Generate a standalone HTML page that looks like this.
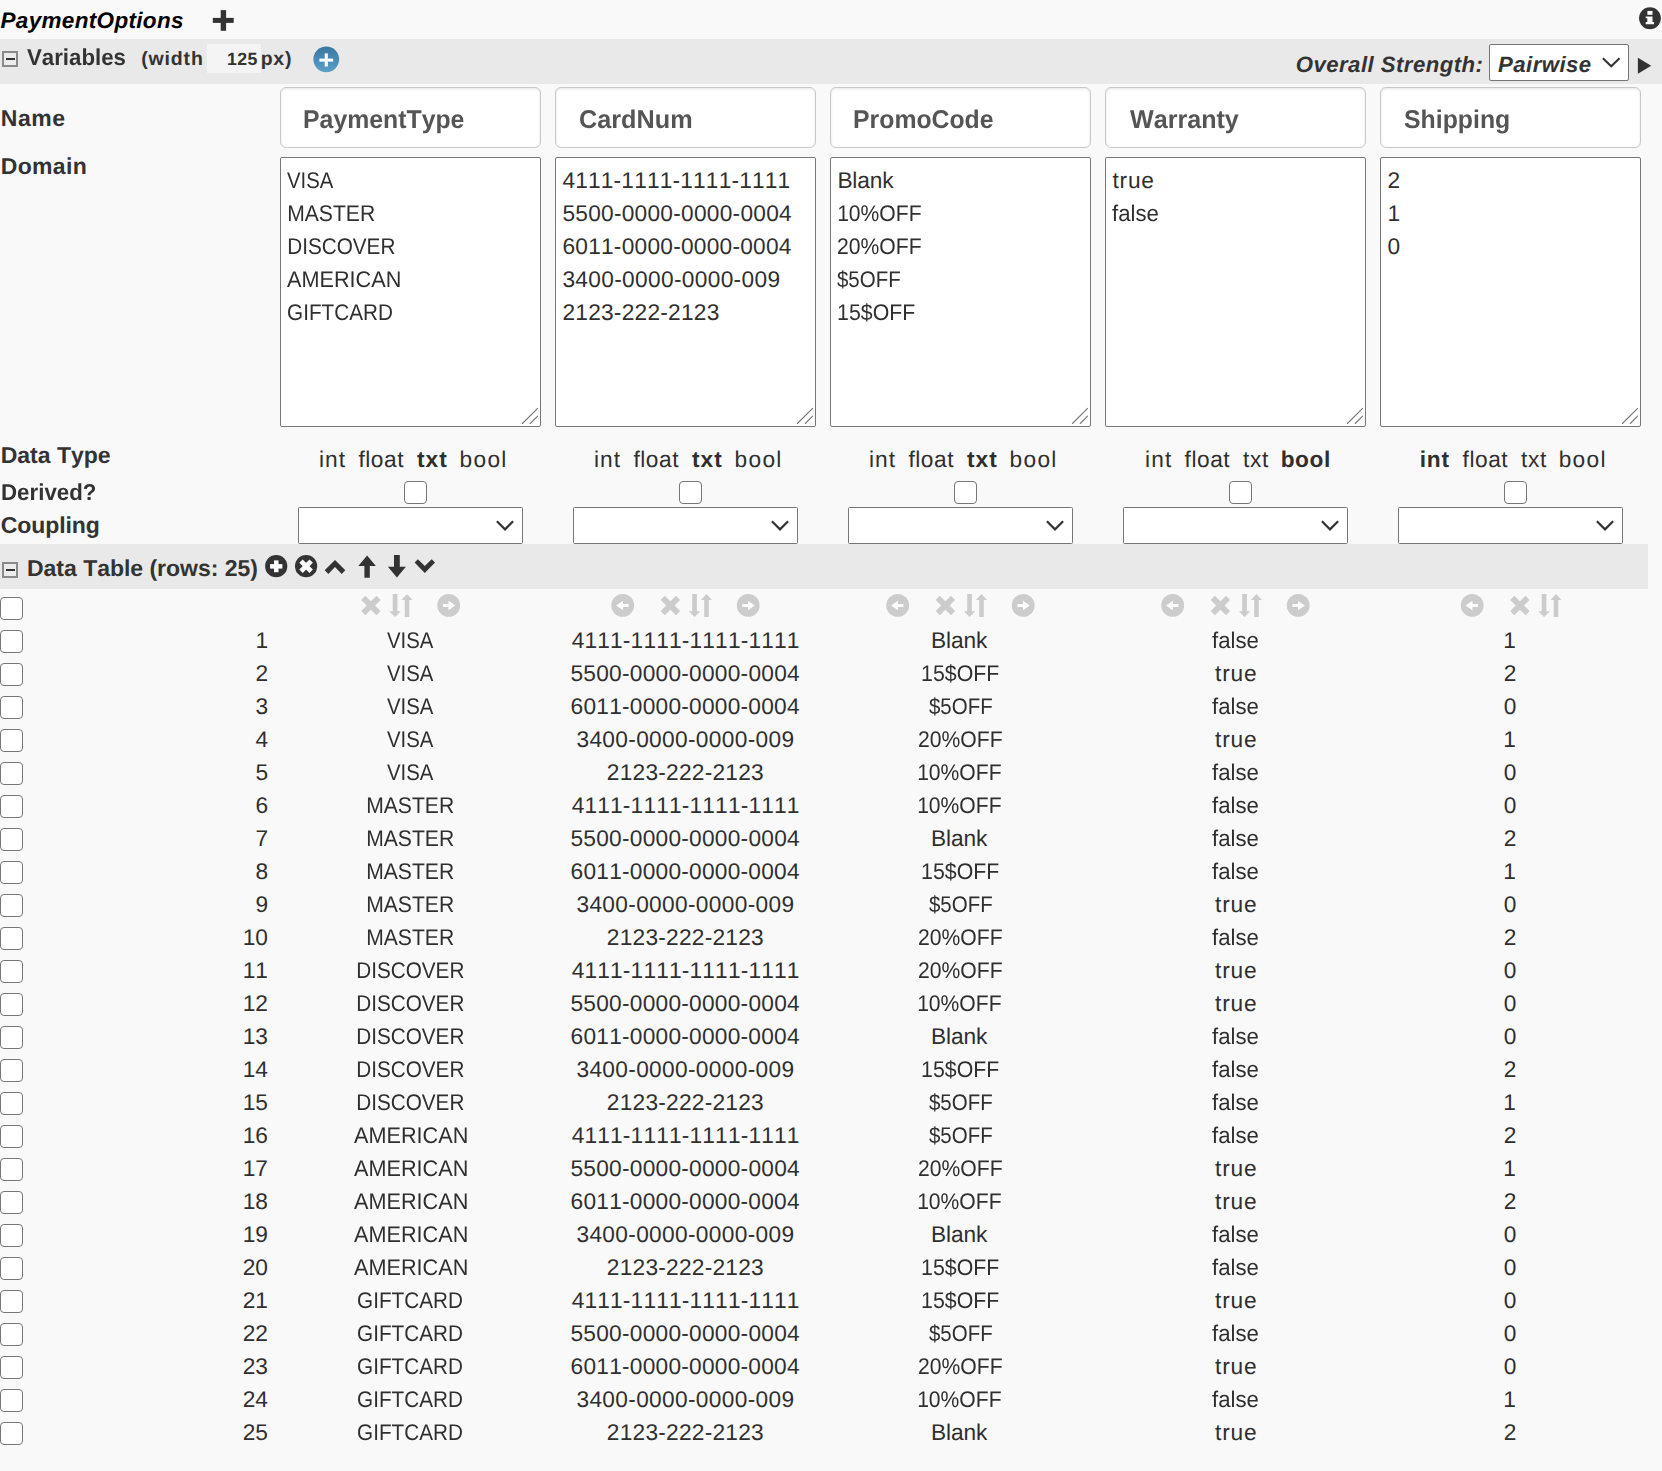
<!DOCTYPE html>
<html><head><meta charset="utf-8">
<style>
html,body{margin:0;padding:0}
body{width:1662px;height:1471px;overflow:hidden;position:relative;background:#f9f9f9;font-family:"Liberation Sans",sans-serif;}
.t{position:absolute;white-space:pre;line-height:40px;font-kerning:none;text-rendering:geometricPrecision;}
.bar{position:absolute;left:0;background:#e9e9e9;height:45px}
.mbox{position:absolute;left:2px;width:12px;height:12px;border:2px solid #8a8a8a;background:#ececec}
.mbox:after{content:"";position:absolute;left:1.5px;top:5px;width:9px;height:2px;background:#333}
.namebox{position:absolute;top:87px;width:259px;height:59px;border:1px solid #c8c8c8;border-radius:6px;background:#fff;box-shadow:inset 0 1px 3px rgba(0,0,0,0.10)}
.ta{position:absolute;top:157px;width:259px;height:268px;border:1px solid #767676;border-radius:2px;background:#fff}
.grip{position:absolute}
.cb{position:absolute;width:21px;height:21px;border:1px solid #767676;border-radius:4px;background:#fff}
.sel{position:absolute;width:223px;height:35px;border:1px solid #767676;border-radius:1.5px;background:#fff}
svg{display:block}
.ic{position:absolute}
</style></head><body>
<div class="bar" style="top:39px;width:1662px"></div>
<div class="mbox" style="top:51px"></div>
<div style="position:absolute;left:207px;top:44px;width:54px;height:29px;background:#f4f4f4"></div>
<div style="position:absolute;left:1489px;top:44px;width:138px;height:35px;border:1px solid #767676;border-radius:2px;background:#fff"></div>
<div class="bar" style="top:544px;width:1648px"></div>
<div class="mbox" style="top:562px"></div>
<div class="cb" style="left:0px;top:597px"></div>
<!--ICONS-->
<div class="t" style="top:1.20px;font-size:22.5px;font-weight:700;font-style:italic;color:#000;letter-spacing:0.323px;left:0.50px;">PaymentOptions</div>
<div class="t" style="top:97.60px;font-size:23px;font-weight:700;font-style:normal;color:#333;letter-spacing:0.600px;left:0.70px;">Name</div>
<div class="t" style="top:145.60px;font-size:23px;font-weight:700;font-style:normal;color:#333;letter-spacing:0.340px;left:0.70px;">Domain</div>
<div class="t" style="top:435.00px;font-size:23px;font-weight:700;font-style:normal;color:#333;letter-spacing:0.000px;left:0.70px;">Data Type</div>
<div class="t" style="top:471.80px;font-size:23px;font-weight:700;font-style:normal;color:#333;letter-spacing:0px;--x:-0.429px;transform:scaleX(0.9688);transform-origin:1px 0;left:0.70px;">Derived?</div>
<div class="t" style="top:504.80px;font-size:23px;font-weight:700;font-style:normal;color:#333;letter-spacing:-0.071px;left:0.70px;">Coupling</div>
<div class="t" style="top:37.00px;font-size:23px;font-weight:700;font-style:normal;color:#333;letter-spacing:0px;--x:-0.425px;transform:scaleX(0.9667);transform-origin:0px 0;left:26.50px;">Variables</div>
<div class="t" style="top:38.80px;font-size:19.5px;font-weight:700;font-style:normal;color:#333;letter-spacing:0.860px;left:141.20px;">(width</div>
<div class="t" style="top:38.80px;font-size:17.7px;font-weight:700;font-style:normal;color:#333;letter-spacing:0.400px;left:227.00px;">125</div>
<div class="t" style="top:38.80px;font-size:19.5px;font-weight:700;font-style:normal;color:#333;letter-spacing:0.750px;left:260.70px;">px)</div>
<div class="t" style="top:45.10px;font-size:22.2px;font-weight:700;font-style:italic;color:#333;letter-spacing:0.456px;left:1295.70px;">Overall Strength:</div>
<div class="t" style="top:45.10px;font-size:22.2px;font-weight:700;font-style:italic;color:#333;letter-spacing:0.429px;left:1498.10px;">Pairwise</div>
<div class="namebox" style="left:280px"></div>
<div class="t" style="top:99.70px;font-size:25.7px;font-weight:700;font-style:normal;color:#555;letter-spacing:0px;--x:-0.560px;transform:scaleX(0.9659);transform-origin:2px 0;left:302.60px;">PaymentType</div>
<div class="ta" style="left:280px"></div>
<svg class="grip" style="left:520px;top:405px" width="20" height="20" viewBox="0 0 20 20"><path d="M2.4 18.5 L17.6 3.4 M10.3 18.5 L17.6 11.2" stroke="#777" stroke-width="1.1" stroke-linecap="round"/></svg>
<div class="t" style="top:159.70px;font-size:22.7px;font-weight:400;font-style:normal;color:#2f2f2f;letter-spacing:0px;--x:-1.800px;transform:scaleX(0.8962);transform-origin:0px 0;left:287.40px;">VISA</div>
<div class="t" style="top:192.70px;font-size:22.7px;font-weight:400;font-style:normal;color:#2f2f2f;letter-spacing:0px;--x:-1.260px;transform:scaleX(0.9308);transform-origin:2px 0;left:287.40px;">MASTER</div>
<div class="t" style="top:225.70px;font-size:22.7px;font-weight:400;font-style:normal;color:#2f2f2f;letter-spacing:0px;--x:-1.429px;transform:scaleX(0.9130);transform-origin:2px 0;left:287.40px;">DISCOVER</div>
<div class="t" style="top:258.70px;font-size:22.7px;font-weight:400;font-style:normal;color:#2f2f2f;letter-spacing:0px;--x:-0.771px;transform:scaleX(0.9542);transform-origin:0px 0;left:287.40px;">AMERICAN</div>
<div class="t" style="top:291.70px;font-size:22.7px;font-weight:400;font-style:normal;color:#2f2f2f;letter-spacing:0px;--x:-1.429px;transform:scaleX(0.9123);transform-origin:1px 0;left:287.40px;">GIFTCARD</div>
<div class="t" style="top:439.10px;font-size:22.7px;font-weight:400;font-style:normal;color:#2f2f2f;letter-spacing:1.100px;left:318.90px;">int</div>
<div class="t" style="top:439.10px;font-size:22.7px;font-weight:400;font-style:normal;color:#2f2f2f;letter-spacing:0.550px;left:358.40px;">float</div>
<div class="t" style="top:439.10px;font-size:22.7px;font-weight:700;font-style:normal;color:#2f2f2f;letter-spacing:1.150px;left:416.90px;">txt</div>
<div class="t" style="top:439.10px;font-size:22.7px;font-weight:400;font-style:normal;color:#2f2f2f;letter-spacing:1.333px;left:459.50px;">bool</div>
<div class="cb" style="left:404px;top:481px"></div>
<div class="sel" style="left:298px;top:507px"><svg style="position:absolute;left:196px;top:12px" width="20" height="12" viewBox="0 0 20 12"><path d="M1.9 1.3 L10 9.4 L18.1 1.3" fill="none" stroke="#333" stroke-width="2.2"/></svg></div>
<div class="namebox" style="left:555px"></div>
<div class="t" style="top:99.70px;font-size:25.7px;font-weight:700;font-style:normal;color:#555;letter-spacing:0px;--x:-0.333px;transform:scaleX(0.9823);transform-origin:1px 0;left:578.60px;">CardNum</div>
<div class="ta" style="left:555px"></div>
<svg class="grip" style="left:795px;top:405px" width="20" height="20" viewBox="0 0 20 20"><path d="M2.4 18.5 L17.6 3.4 M10.3 18.5 L17.6 11.2" stroke="#777" stroke-width="1.1" stroke-linecap="round"/></svg>
<div class="t" style="top:159.70px;font-size:22.7px;font-weight:400;font-style:normal;color:#2f2f2f;letter-spacing:0.183px;left:562.40px;">4111-1111-1111-1111</div>
<div class="t" style="top:192.70px;font-size:22.7px;font-weight:400;font-style:normal;color:#2f2f2f;letter-spacing:0.261px;left:562.40px;">5500-0000-0000-0004</div>
<div class="t" style="top:225.70px;font-size:22.7px;font-weight:400;font-style:normal;color:#2f2f2f;letter-spacing:0.250px;left:562.40px;">6011-0000-0000-0004</div>
<div class="t" style="top:258.70px;font-size:22.7px;font-weight:400;font-style:normal;color:#2f2f2f;letter-spacing:0.335px;left:562.40px;">3400-0000-0000-009</div>
<div class="t" style="top:291.70px;font-size:22.7px;font-weight:400;font-style:normal;color:#2f2f2f;letter-spacing:0.250px;left:562.40px;">2123-222-2123</div>
<div class="t" style="top:439.10px;font-size:22.7px;font-weight:400;font-style:normal;color:#2f2f2f;letter-spacing:1.100px;left:593.90px;">int</div>
<div class="t" style="top:439.10px;font-size:22.7px;font-weight:400;font-style:normal;color:#2f2f2f;letter-spacing:0.550px;left:633.40px;">float</div>
<div class="t" style="top:439.10px;font-size:22.7px;font-weight:700;font-style:normal;color:#2f2f2f;letter-spacing:1.150px;left:691.90px;">txt</div>
<div class="t" style="top:439.10px;font-size:22.7px;font-weight:400;font-style:normal;color:#2f2f2f;letter-spacing:1.333px;left:734.50px;">bool</div>
<div class="cb" style="left:679px;top:481px"></div>
<div class="sel" style="left:573px;top:507px"><svg style="position:absolute;left:196px;top:12px" width="20" height="12" viewBox="0 0 20 12"><path d="M1.9 1.3 L10 9.4 L18.1 1.3" fill="none" stroke="#333" stroke-width="2.2"/></svg></div>
<div class="namebox" style="left:830px"></div>
<div class="t" style="top:99.70px;font-size:25.7px;font-weight:700;font-style:normal;color:#555;letter-spacing:0px;--x:-0.625px;transform:scaleX(0.9650);transform-origin:2px 0;left:852.60px;">PromoCode</div>
<div class="ta" style="left:830px"></div>
<svg class="grip" style="left:1070px;top:405px" width="20" height="20" viewBox="0 0 20 20"><path d="M2.4 18.5 L17.6 3.4 M10.3 18.5 L17.6 11.2" stroke="#777" stroke-width="1.1" stroke-linecap="round"/></svg>
<div class="t" style="top:159.70px;font-size:22.7px;font-weight:400;font-style:normal;color:#2f2f2f;letter-spacing:-0.150px;left:837.40px;">Blank</div>
<div class="t" style="top:192.70px;font-size:22.7px;font-weight:400;font-style:normal;color:#2f2f2f;letter-spacing:0px;--x:-1.240px;transform:scaleX(0.9295);transform-origin:2px 0;left:837.40px;">10%OFF</div>
<div class="t" style="top:225.70px;font-size:22.7px;font-weight:400;font-style:normal;color:#2f2f2f;letter-spacing:0px;--x:-1.220px;transform:scaleX(0.9315);transform-origin:1px 0;left:837.40px;">20%OFF</div>
<div class="t" style="top:258.70px;font-size:22.7px;font-weight:400;font-style:normal;color:#2f2f2f;letter-spacing:0px;--x:-1.725px;transform:scaleX(0.9014);transform-origin:0px 0;left:837.40px;">$5OFF</div>
<div class="t" style="top:291.70px;font-size:22.7px;font-weight:400;font-style:normal;color:#2f2f2f;letter-spacing:0px;--x:-0.980px;transform:scaleX(0.9387);transform-origin:2px 0;left:837.40px;">15$OFF</div>
<div class="t" style="top:439.10px;font-size:22.7px;font-weight:400;font-style:normal;color:#2f2f2f;letter-spacing:1.100px;left:868.90px;">int</div>
<div class="t" style="top:439.10px;font-size:22.7px;font-weight:400;font-style:normal;color:#2f2f2f;letter-spacing:0.550px;left:908.40px;">float</div>
<div class="t" style="top:439.10px;font-size:22.7px;font-weight:700;font-style:normal;color:#2f2f2f;letter-spacing:1.150px;left:966.90px;">txt</div>
<div class="t" style="top:439.10px;font-size:22.7px;font-weight:400;font-style:normal;color:#2f2f2f;letter-spacing:1.333px;left:1009.50px;">bool</div>
<div class="cb" style="left:954px;top:481px"></div>
<div class="sel" style="left:848px;top:507px"><svg style="position:absolute;left:196px;top:12px" width="20" height="12" viewBox="0 0 20 12"><path d="M1.9 1.3 L10 9.4 L18.1 1.3" fill="none" stroke="#333" stroke-width="2.2"/></svg></div>
<div class="namebox" style="left:1105px"></div>
<div class="t" style="top:99.70px;font-size:25.7px;font-weight:700;font-style:normal;color:#555;letter-spacing:0px;--x:-0.357px;transform:scaleX(0.9775);transform-origin:0px 0;left:1129.60px;">Warranty</div>
<div class="ta" style="left:1105px"></div>
<svg class="grip" style="left:1345px;top:405px" width="20" height="20" viewBox="0 0 20 20"><path d="M2.4 18.5 L17.6 3.4 M10.3 18.5 L17.6 11.2" stroke="#777" stroke-width="1.1" stroke-linecap="round"/></svg>
<div class="t" style="top:159.70px;font-size:22.7px;font-weight:400;font-style:normal;color:#2f2f2f;letter-spacing:0.833px;left:1112.40px;">true</div>
<div class="t" style="top:192.70px;font-size:22.7px;font-weight:400;font-style:normal;color:#2f2f2f;letter-spacing:0px;--x:-0.275px;transform:scaleX(0.9766);transform-origin:0px 0;left:1112.40px;">false</div>
<div class="t" style="top:439.10px;font-size:22.7px;font-weight:400;font-style:normal;color:#2f2f2f;letter-spacing:1.100px;left:1145.05px;">int</div>
<div class="t" style="top:439.10px;font-size:22.7px;font-weight:400;font-style:normal;color:#2f2f2f;letter-spacing:0.550px;left:1184.55px;">float</div>
<div class="t" style="top:439.10px;font-size:22.7px;font-weight:400;font-style:normal;color:#2f2f2f;letter-spacing:0.650px;left:1243.05px;">txt</div>
<div class="t" style="top:439.10px;font-size:22.7px;font-weight:700;font-style:normal;color:#2f2f2f;letter-spacing:0.567px;left:1280.65px;">bool</div>
<div class="cb" style="left:1229px;top:481px"></div>
<div class="sel" style="left:1123px;top:507px"><svg style="position:absolute;left:196px;top:12px" width="20" height="12" viewBox="0 0 20 12"><path d="M1.9 1.3 L10 9.4 L18.1 1.3" fill="none" stroke="#333" stroke-width="2.2"/></svg></div>
<div class="namebox" style="left:1380px"></div>
<div class="t" style="top:99.70px;font-size:25.7px;font-weight:700;font-style:normal;color:#555;letter-spacing:0px;--x:-0.514px;transform:scaleX(0.9664);transform-origin:1px 0;left:1403.60px;">Shipping</div>
<div class="ta" style="left:1380px"></div>
<svg class="grip" style="left:1620px;top:405px" width="20" height="20" viewBox="0 0 20 20"><path d="M2.4 18.5 L17.6 3.4 M10.3 18.5 L17.6 11.2" stroke="#777" stroke-width="1.1" stroke-linecap="round"/></svg>
<div class="t" style="top:159.70px;font-size:22.7px;font-weight:400;font-style:normal;color:#2f2f2f;letter-spacing:0.000px;left:1387.40px;">2</div>
<div class="t" style="top:192.70px;font-size:22.7px;font-weight:400;font-style:normal;color:#2f2f2f;letter-spacing:0.000px;left:1387.40px;">1</div>
<div class="t" style="top:225.70px;font-size:22.7px;font-weight:400;font-style:normal;color:#2f2f2f;letter-spacing:0.000px;left:1387.40px;">0</div>
<div class="t" style="top:439.10px;font-size:22.7px;font-weight:700;font-style:normal;color:#2f2f2f;letter-spacing:0.750px;left:1419.75px;">int</div>
<div class="t" style="top:439.10px;font-size:22.7px;font-weight:400;font-style:normal;color:#2f2f2f;letter-spacing:0.550px;left:1462.55px;">float</div>
<div class="t" style="top:439.10px;font-size:22.7px;font-weight:400;font-style:normal;color:#2f2f2f;letter-spacing:0.650px;left:1521.05px;">txt</div>
<div class="t" style="top:439.10px;font-size:22.7px;font-weight:400;font-style:normal;color:#2f2f2f;letter-spacing:1.333px;left:1558.65px;">bool</div>
<div class="cb" style="left:1504px;top:481px"></div>
<div class="sel" style="left:1398px;top:507px"><svg style="position:absolute;left:196px;top:12px" width="20" height="12" viewBox="0 0 20 12"><path d="M1.9 1.3 L10 9.4 L18.1 1.3" fill="none" stroke="#333" stroke-width="2.2"/></svg></div>
<div class="t" style="top:548.00px;font-size:23px;font-weight:700;font-style:normal;color:#333;letter-spacing:-0.020px;left:27.00px;">Data Table (rows: 25)</div>
<div class="cb" style="left:0px;top:630px"></div>
<div class="t" style="top:619.70px;font-size:22.7px;font-weight:400;font-style:normal;color:#2f2f2f;letter-spacing:0.000px;right:1394.00px;text-align:right;">1</div>
<div class="t" style="top:619.70px;font-size:22.7px;font-weight:400;font-style:normal;color:#2f2f2f;letter-spacing:0px;--x:-1.800px;transform:scaleX(0.8962);transform-origin:0px 0;left:387.00px;">VISA</div>
<div class="t" style="top:619.70px;font-size:22.7px;font-weight:400;font-style:normal;color:#2f2f2f;letter-spacing:0.183px;left:571.65px;">4111-1111-1111-1111</div>
<div class="t" style="top:619.70px;font-size:22.7px;font-weight:400;font-style:normal;color:#2f2f2f;letter-spacing:-0.150px;left:931.10px;">Blank</div>
<div class="t" style="top:619.70px;font-size:22.7px;font-weight:400;font-style:normal;color:#2f2f2f;letter-spacing:0px;--x:-0.275px;transform:scaleX(0.9766);transform-origin:0px 0;left:1212.35px;">false</div>
<div class="t" style="top:619.70px;font-size:22.7px;font-weight:400;font-style:normal;color:#2f2f2f;letter-spacing:0.000px;left:1503.30px;">1</div>
<div class="cb" style="left:0px;top:663px"></div>
<div class="t" style="top:652.70px;font-size:22.7px;font-weight:400;font-style:normal;color:#2f2f2f;letter-spacing:0.000px;right:1394.00px;text-align:right;">2</div>
<div class="t" style="top:652.70px;font-size:22.7px;font-weight:400;font-style:normal;color:#2f2f2f;letter-spacing:0px;--x:-1.800px;transform:scaleX(0.8962);transform-origin:0px 0;left:387.00px;">VISA</div>
<div class="t" style="top:652.70px;font-size:22.7px;font-weight:400;font-style:normal;color:#2f2f2f;letter-spacing:0.261px;left:570.45px;">5500-0000-0000-0004</div>
<div class="t" style="top:652.70px;font-size:22.7px;font-weight:400;font-style:normal;color:#2f2f2f;letter-spacing:0px;--x:-0.980px;transform:scaleX(0.9387);transform-origin:2px 0;left:920.75px;">15$OFF</div>
<div class="t" style="top:652.70px;font-size:22.7px;font-weight:400;font-style:normal;color:#2f2f2f;letter-spacing:0.833px;left:1215.05px;">true</div>
<div class="t" style="top:652.70px;font-size:22.7px;font-weight:400;font-style:normal;color:#2f2f2f;letter-spacing:0.000px;left:1503.80px;">2</div>
<div class="cb" style="left:0px;top:696px"></div>
<div class="t" style="top:685.70px;font-size:22.7px;font-weight:400;font-style:normal;color:#2f2f2f;letter-spacing:0.000px;right:1394.00px;text-align:right;">3</div>
<div class="t" style="top:685.70px;font-size:22.7px;font-weight:400;font-style:normal;color:#2f2f2f;letter-spacing:0px;--x:-1.800px;transform:scaleX(0.8962);transform-origin:0px 0;left:387.00px;">VISA</div>
<div class="t" style="top:685.70px;font-size:22.7px;font-weight:400;font-style:normal;color:#2f2f2f;letter-spacing:0.250px;left:570.55px;">6011-0000-0000-0004</div>
<div class="t" style="top:685.70px;font-size:22.7px;font-weight:400;font-style:normal;color:#2f2f2f;letter-spacing:0px;--x:-1.725px;transform:scaleX(0.9014);transform-origin:0px 0;left:928.75px;">$5OFF</div>
<div class="t" style="top:685.70px;font-size:22.7px;font-weight:400;font-style:normal;color:#2f2f2f;letter-spacing:0px;--x:-0.275px;transform:scaleX(0.9766);transform-origin:0px 0;left:1212.35px;">false</div>
<div class="t" style="top:685.70px;font-size:22.7px;font-weight:400;font-style:normal;color:#2f2f2f;letter-spacing:0.000px;left:1503.80px;">0</div>
<div class="cb" style="left:0px;top:729px"></div>
<div class="t" style="top:718.70px;font-size:22.7px;font-weight:400;font-style:normal;color:#2f2f2f;letter-spacing:0.000px;right:1394.00px;text-align:right;">4</div>
<div class="t" style="top:718.70px;font-size:22.7px;font-weight:400;font-style:normal;color:#2f2f2f;letter-spacing:0px;--x:-1.800px;transform:scaleX(0.8962);transform-origin:0px 0;left:387.00px;">VISA</div>
<div class="t" style="top:718.70px;font-size:22.7px;font-weight:400;font-style:normal;color:#2f2f2f;letter-spacing:0.335px;left:576.45px;">3400-0000-0000-009</div>
<div class="t" style="top:718.70px;font-size:22.7px;font-weight:400;font-style:normal;color:#2f2f2f;letter-spacing:0px;--x:-1.220px;transform:scaleX(0.9315);transform-origin:1px 0;left:917.85px;">20%OFF</div>
<div class="t" style="top:718.70px;font-size:22.7px;font-weight:400;font-style:normal;color:#2f2f2f;letter-spacing:0.833px;left:1215.05px;">true</div>
<div class="t" style="top:718.70px;font-size:22.7px;font-weight:400;font-style:normal;color:#2f2f2f;letter-spacing:0.000px;left:1503.30px;">1</div>
<div class="cb" style="left:0px;top:762px"></div>
<div class="t" style="top:751.70px;font-size:22.7px;font-weight:400;font-style:normal;color:#2f2f2f;letter-spacing:0.000px;right:1394.00px;text-align:right;">5</div>
<div class="t" style="top:751.70px;font-size:22.7px;font-weight:400;font-style:normal;color:#2f2f2f;letter-spacing:0px;--x:-1.800px;transform:scaleX(0.8962);transform-origin:0px 0;left:387.00px;">VISA</div>
<div class="t" style="top:751.70px;font-size:22.7px;font-weight:400;font-style:normal;color:#2f2f2f;letter-spacing:0.250px;left:606.80px;">2123-222-2123</div>
<div class="t" style="top:751.70px;font-size:22.7px;font-weight:400;font-style:normal;color:#2f2f2f;letter-spacing:0px;--x:-1.240px;transform:scaleX(0.9295);transform-origin:2px 0;left:917.40px;">10%OFF</div>
<div class="t" style="top:751.70px;font-size:22.7px;font-weight:400;font-style:normal;color:#2f2f2f;letter-spacing:0px;--x:-0.275px;transform:scaleX(0.9766);transform-origin:0px 0;left:1212.35px;">false</div>
<div class="t" style="top:751.70px;font-size:22.7px;font-weight:400;font-style:normal;color:#2f2f2f;letter-spacing:0.000px;left:1503.80px;">0</div>
<div class="cb" style="left:0px;top:795px"></div>
<div class="t" style="top:784.70px;font-size:22.7px;font-weight:400;font-style:normal;color:#2f2f2f;letter-spacing:0.000px;right:1394.00px;text-align:right;">6</div>
<div class="t" style="top:784.70px;font-size:22.7px;font-weight:400;font-style:normal;color:#2f2f2f;letter-spacing:0px;--x:-1.260px;transform:scaleX(0.9308);transform-origin:2px 0;left:365.95px;">MASTER</div>
<div class="t" style="top:784.70px;font-size:22.7px;font-weight:400;font-style:normal;color:#2f2f2f;letter-spacing:0.183px;left:571.65px;">4111-1111-1111-1111</div>
<div class="t" style="top:784.70px;font-size:22.7px;font-weight:400;font-style:normal;color:#2f2f2f;letter-spacing:0px;--x:-1.240px;transform:scaleX(0.9295);transform-origin:2px 0;left:917.40px;">10%OFF</div>
<div class="t" style="top:784.70px;font-size:22.7px;font-weight:400;font-style:normal;color:#2f2f2f;letter-spacing:0px;--x:-0.275px;transform:scaleX(0.9766);transform-origin:0px 0;left:1212.35px;">false</div>
<div class="t" style="top:784.70px;font-size:22.7px;font-weight:400;font-style:normal;color:#2f2f2f;letter-spacing:0.000px;left:1503.80px;">0</div>
<div class="cb" style="left:0px;top:828px"></div>
<div class="t" style="top:817.70px;font-size:22.7px;font-weight:400;font-style:normal;color:#2f2f2f;letter-spacing:0.000px;right:1394.00px;text-align:right;">7</div>
<div class="t" style="top:817.70px;font-size:22.7px;font-weight:400;font-style:normal;color:#2f2f2f;letter-spacing:0px;--x:-1.260px;transform:scaleX(0.9308);transform-origin:2px 0;left:365.95px;">MASTER</div>
<div class="t" style="top:817.70px;font-size:22.7px;font-weight:400;font-style:normal;color:#2f2f2f;letter-spacing:0.261px;left:570.45px;">5500-0000-0000-0004</div>
<div class="t" style="top:817.70px;font-size:22.7px;font-weight:400;font-style:normal;color:#2f2f2f;letter-spacing:-0.150px;left:931.10px;">Blank</div>
<div class="t" style="top:817.70px;font-size:22.7px;font-weight:400;font-style:normal;color:#2f2f2f;letter-spacing:0px;--x:-0.275px;transform:scaleX(0.9766);transform-origin:0px 0;left:1212.35px;">false</div>
<div class="t" style="top:817.70px;font-size:22.7px;font-weight:400;font-style:normal;color:#2f2f2f;letter-spacing:0.000px;left:1503.80px;">2</div>
<div class="cb" style="left:0px;top:861px"></div>
<div class="t" style="top:850.70px;font-size:22.7px;font-weight:400;font-style:normal;color:#2f2f2f;letter-spacing:0.000px;right:1394.00px;text-align:right;">8</div>
<div class="t" style="top:850.70px;font-size:22.7px;font-weight:400;font-style:normal;color:#2f2f2f;letter-spacing:0px;--x:-1.260px;transform:scaleX(0.9308);transform-origin:2px 0;left:365.95px;">MASTER</div>
<div class="t" style="top:850.70px;font-size:22.7px;font-weight:400;font-style:normal;color:#2f2f2f;letter-spacing:0.250px;left:570.55px;">6011-0000-0000-0004</div>
<div class="t" style="top:850.70px;font-size:22.7px;font-weight:400;font-style:normal;color:#2f2f2f;letter-spacing:0px;--x:-0.980px;transform:scaleX(0.9387);transform-origin:2px 0;left:920.75px;">15$OFF</div>
<div class="t" style="top:850.70px;font-size:22.7px;font-weight:400;font-style:normal;color:#2f2f2f;letter-spacing:0px;--x:-0.275px;transform:scaleX(0.9766);transform-origin:0px 0;left:1212.35px;">false</div>
<div class="t" style="top:850.70px;font-size:22.7px;font-weight:400;font-style:normal;color:#2f2f2f;letter-spacing:0.000px;left:1503.30px;">1</div>
<div class="cb" style="left:0px;top:894px"></div>
<div class="t" style="top:883.70px;font-size:22.7px;font-weight:400;font-style:normal;color:#2f2f2f;letter-spacing:0.000px;right:1394.00px;text-align:right;">9</div>
<div class="t" style="top:883.70px;font-size:22.7px;font-weight:400;font-style:normal;color:#2f2f2f;letter-spacing:0px;--x:-1.260px;transform:scaleX(0.9308);transform-origin:2px 0;left:365.95px;">MASTER</div>
<div class="t" style="top:883.70px;font-size:22.7px;font-weight:400;font-style:normal;color:#2f2f2f;letter-spacing:0.335px;left:576.45px;">3400-0000-0000-009</div>
<div class="t" style="top:883.70px;font-size:22.7px;font-weight:400;font-style:normal;color:#2f2f2f;letter-spacing:0px;--x:-1.725px;transform:scaleX(0.9014);transform-origin:0px 0;left:928.75px;">$5OFF</div>
<div class="t" style="top:883.70px;font-size:22.7px;font-weight:400;font-style:normal;color:#2f2f2f;letter-spacing:0.833px;left:1215.05px;">true</div>
<div class="t" style="top:883.70px;font-size:22.7px;font-weight:400;font-style:normal;color:#2f2f2f;letter-spacing:0.000px;left:1503.80px;">0</div>
<div class="cb" style="left:0px;top:927px"></div>
<div class="t" style="top:916.70px;font-size:22.7px;font-weight:400;font-style:normal;color:#2f2f2f;letter-spacing:0.000px;right:1394.00px;text-align:right;">10</div>
<div class="t" style="top:916.70px;font-size:22.7px;font-weight:400;font-style:normal;color:#2f2f2f;letter-spacing:0px;--x:-1.260px;transform:scaleX(0.9308);transform-origin:2px 0;left:365.95px;">MASTER</div>
<div class="t" style="top:916.70px;font-size:22.7px;font-weight:400;font-style:normal;color:#2f2f2f;letter-spacing:0.250px;left:606.80px;">2123-222-2123</div>
<div class="t" style="top:916.70px;font-size:22.7px;font-weight:400;font-style:normal;color:#2f2f2f;letter-spacing:0px;--x:-1.220px;transform:scaleX(0.9315);transform-origin:1px 0;left:917.85px;">20%OFF</div>
<div class="t" style="top:916.70px;font-size:22.7px;font-weight:400;font-style:normal;color:#2f2f2f;letter-spacing:0px;--x:-0.275px;transform:scaleX(0.9766);transform-origin:0px 0;left:1212.35px;">false</div>
<div class="t" style="top:916.70px;font-size:22.7px;font-weight:400;font-style:normal;color:#2f2f2f;letter-spacing:0.000px;left:1503.80px;">2</div>
<div class="cb" style="left:0px;top:960px"></div>
<div class="t" style="top:949.70px;font-size:22.7px;font-weight:400;font-style:normal;color:#2f2f2f;letter-spacing:0.000px;right:1394.00px;text-align:right;">11</div>
<div class="t" style="top:949.70px;font-size:22.7px;font-weight:400;font-style:normal;color:#2f2f2f;letter-spacing:0px;--x:-1.429px;transform:scaleX(0.9130);transform-origin:2px 0;left:355.80px;">DISCOVER</div>
<div class="t" style="top:949.70px;font-size:22.7px;font-weight:400;font-style:normal;color:#2f2f2f;letter-spacing:0.183px;left:571.65px;">4111-1111-1111-1111</div>
<div class="t" style="top:949.70px;font-size:22.7px;font-weight:400;font-style:normal;color:#2f2f2f;letter-spacing:0px;--x:-1.220px;transform:scaleX(0.9315);transform-origin:1px 0;left:917.85px;">20%OFF</div>
<div class="t" style="top:949.70px;font-size:22.7px;font-weight:400;font-style:normal;color:#2f2f2f;letter-spacing:0.833px;left:1215.05px;">true</div>
<div class="t" style="top:949.70px;font-size:22.7px;font-weight:400;font-style:normal;color:#2f2f2f;letter-spacing:0.000px;left:1503.80px;">0</div>
<div class="cb" style="left:0px;top:993px"></div>
<div class="t" style="top:982.70px;font-size:22.7px;font-weight:400;font-style:normal;color:#2f2f2f;letter-spacing:0.000px;right:1394.00px;text-align:right;">12</div>
<div class="t" style="top:982.70px;font-size:22.7px;font-weight:400;font-style:normal;color:#2f2f2f;letter-spacing:0px;--x:-1.429px;transform:scaleX(0.9130);transform-origin:2px 0;left:355.80px;">DISCOVER</div>
<div class="t" style="top:982.70px;font-size:22.7px;font-weight:400;font-style:normal;color:#2f2f2f;letter-spacing:0.261px;left:570.45px;">5500-0000-0000-0004</div>
<div class="t" style="top:982.70px;font-size:22.7px;font-weight:400;font-style:normal;color:#2f2f2f;letter-spacing:0px;--x:-1.240px;transform:scaleX(0.9295);transform-origin:2px 0;left:917.40px;">10%OFF</div>
<div class="t" style="top:982.70px;font-size:22.7px;font-weight:400;font-style:normal;color:#2f2f2f;letter-spacing:0.833px;left:1215.05px;">true</div>
<div class="t" style="top:982.70px;font-size:22.7px;font-weight:400;font-style:normal;color:#2f2f2f;letter-spacing:0.000px;left:1503.80px;">0</div>
<div class="cb" style="left:0px;top:1026px"></div>
<div class="t" style="top:1015.70px;font-size:22.7px;font-weight:400;font-style:normal;color:#2f2f2f;letter-spacing:0.000px;right:1394.00px;text-align:right;">13</div>
<div class="t" style="top:1015.70px;font-size:22.7px;font-weight:400;font-style:normal;color:#2f2f2f;letter-spacing:0px;--x:-1.429px;transform:scaleX(0.9130);transform-origin:2px 0;left:355.80px;">DISCOVER</div>
<div class="t" style="top:1015.70px;font-size:22.7px;font-weight:400;font-style:normal;color:#2f2f2f;letter-spacing:0.250px;left:570.55px;">6011-0000-0000-0004</div>
<div class="t" style="top:1015.70px;font-size:22.7px;font-weight:400;font-style:normal;color:#2f2f2f;letter-spacing:-0.150px;left:931.10px;">Blank</div>
<div class="t" style="top:1015.70px;font-size:22.7px;font-weight:400;font-style:normal;color:#2f2f2f;letter-spacing:0px;--x:-0.275px;transform:scaleX(0.9766);transform-origin:0px 0;left:1212.35px;">false</div>
<div class="t" style="top:1015.70px;font-size:22.7px;font-weight:400;font-style:normal;color:#2f2f2f;letter-spacing:0.000px;left:1503.80px;">0</div>
<div class="cb" style="left:0px;top:1059px"></div>
<div class="t" style="top:1048.70px;font-size:22.7px;font-weight:400;font-style:normal;color:#2f2f2f;letter-spacing:0.000px;right:1394.00px;text-align:right;">14</div>
<div class="t" style="top:1048.70px;font-size:22.7px;font-weight:400;font-style:normal;color:#2f2f2f;letter-spacing:0px;--x:-1.429px;transform:scaleX(0.9130);transform-origin:2px 0;left:355.80px;">DISCOVER</div>
<div class="t" style="top:1048.70px;font-size:22.7px;font-weight:400;font-style:normal;color:#2f2f2f;letter-spacing:0.335px;left:576.45px;">3400-0000-0000-009</div>
<div class="t" style="top:1048.70px;font-size:22.7px;font-weight:400;font-style:normal;color:#2f2f2f;letter-spacing:0px;--x:-0.980px;transform:scaleX(0.9387);transform-origin:2px 0;left:920.75px;">15$OFF</div>
<div class="t" style="top:1048.70px;font-size:22.7px;font-weight:400;font-style:normal;color:#2f2f2f;letter-spacing:0px;--x:-0.275px;transform:scaleX(0.9766);transform-origin:0px 0;left:1212.35px;">false</div>
<div class="t" style="top:1048.70px;font-size:22.7px;font-weight:400;font-style:normal;color:#2f2f2f;letter-spacing:0.000px;left:1503.80px;">2</div>
<div class="cb" style="left:0px;top:1092px"></div>
<div class="t" style="top:1081.70px;font-size:22.7px;font-weight:400;font-style:normal;color:#2f2f2f;letter-spacing:0.000px;right:1394.00px;text-align:right;">15</div>
<div class="t" style="top:1081.70px;font-size:22.7px;font-weight:400;font-style:normal;color:#2f2f2f;letter-spacing:0px;--x:-1.429px;transform:scaleX(0.9130);transform-origin:2px 0;left:355.80px;">DISCOVER</div>
<div class="t" style="top:1081.70px;font-size:22.7px;font-weight:400;font-style:normal;color:#2f2f2f;letter-spacing:0.250px;left:606.80px;">2123-222-2123</div>
<div class="t" style="top:1081.70px;font-size:22.7px;font-weight:400;font-style:normal;color:#2f2f2f;letter-spacing:0px;--x:-1.725px;transform:scaleX(0.9014);transform-origin:0px 0;left:928.75px;">$5OFF</div>
<div class="t" style="top:1081.70px;font-size:22.7px;font-weight:400;font-style:normal;color:#2f2f2f;letter-spacing:0px;--x:-0.275px;transform:scaleX(0.9766);transform-origin:0px 0;left:1212.35px;">false</div>
<div class="t" style="top:1081.70px;font-size:22.7px;font-weight:400;font-style:normal;color:#2f2f2f;letter-spacing:0.000px;left:1503.30px;">1</div>
<div class="cb" style="left:0px;top:1125px"></div>
<div class="t" style="top:1114.70px;font-size:22.7px;font-weight:400;font-style:normal;color:#2f2f2f;letter-spacing:0.000px;right:1394.00px;text-align:right;">16</div>
<div class="t" style="top:1114.70px;font-size:22.7px;font-weight:400;font-style:normal;color:#2f2f2f;letter-spacing:0px;--x:-0.771px;transform:scaleX(0.9542);transform-origin:0px 0;left:354.00px;">AMERICAN</div>
<div class="t" style="top:1114.70px;font-size:22.7px;font-weight:400;font-style:normal;color:#2f2f2f;letter-spacing:0.183px;left:571.65px;">4111-1111-1111-1111</div>
<div class="t" style="top:1114.70px;font-size:22.7px;font-weight:400;font-style:normal;color:#2f2f2f;letter-spacing:0px;--x:-1.725px;transform:scaleX(0.9014);transform-origin:0px 0;left:928.75px;">$5OFF</div>
<div class="t" style="top:1114.70px;font-size:22.7px;font-weight:400;font-style:normal;color:#2f2f2f;letter-spacing:0px;--x:-0.275px;transform:scaleX(0.9766);transform-origin:0px 0;left:1212.35px;">false</div>
<div class="t" style="top:1114.70px;font-size:22.7px;font-weight:400;font-style:normal;color:#2f2f2f;letter-spacing:0.000px;left:1503.80px;">2</div>
<div class="cb" style="left:0px;top:1158px"></div>
<div class="t" style="top:1147.70px;font-size:22.7px;font-weight:400;font-style:normal;color:#2f2f2f;letter-spacing:0.000px;right:1394.00px;text-align:right;">17</div>
<div class="t" style="top:1147.70px;font-size:22.7px;font-weight:400;font-style:normal;color:#2f2f2f;letter-spacing:0px;--x:-0.771px;transform:scaleX(0.9542);transform-origin:0px 0;left:354.00px;">AMERICAN</div>
<div class="t" style="top:1147.70px;font-size:22.7px;font-weight:400;font-style:normal;color:#2f2f2f;letter-spacing:0.261px;left:570.45px;">5500-0000-0000-0004</div>
<div class="t" style="top:1147.70px;font-size:22.7px;font-weight:400;font-style:normal;color:#2f2f2f;letter-spacing:0px;--x:-1.220px;transform:scaleX(0.9315);transform-origin:1px 0;left:917.85px;">20%OFF</div>
<div class="t" style="top:1147.70px;font-size:22.7px;font-weight:400;font-style:normal;color:#2f2f2f;letter-spacing:0.833px;left:1215.05px;">true</div>
<div class="t" style="top:1147.70px;font-size:22.7px;font-weight:400;font-style:normal;color:#2f2f2f;letter-spacing:0.000px;left:1503.30px;">1</div>
<div class="cb" style="left:0px;top:1191px"></div>
<div class="t" style="top:1180.70px;font-size:22.7px;font-weight:400;font-style:normal;color:#2f2f2f;letter-spacing:0.000px;right:1394.00px;text-align:right;">18</div>
<div class="t" style="top:1180.70px;font-size:22.7px;font-weight:400;font-style:normal;color:#2f2f2f;letter-spacing:0px;--x:-0.771px;transform:scaleX(0.9542);transform-origin:0px 0;left:354.00px;">AMERICAN</div>
<div class="t" style="top:1180.70px;font-size:22.7px;font-weight:400;font-style:normal;color:#2f2f2f;letter-spacing:0.250px;left:570.55px;">6011-0000-0000-0004</div>
<div class="t" style="top:1180.70px;font-size:22.7px;font-weight:400;font-style:normal;color:#2f2f2f;letter-spacing:0px;--x:-1.240px;transform:scaleX(0.9295);transform-origin:2px 0;left:917.40px;">10%OFF</div>
<div class="t" style="top:1180.70px;font-size:22.7px;font-weight:400;font-style:normal;color:#2f2f2f;letter-spacing:0.833px;left:1215.05px;">true</div>
<div class="t" style="top:1180.70px;font-size:22.7px;font-weight:400;font-style:normal;color:#2f2f2f;letter-spacing:0.000px;left:1503.80px;">2</div>
<div class="cb" style="left:0px;top:1224px"></div>
<div class="t" style="top:1213.70px;font-size:22.7px;font-weight:400;font-style:normal;color:#2f2f2f;letter-spacing:0.000px;right:1394.00px;text-align:right;">19</div>
<div class="t" style="top:1213.70px;font-size:22.7px;font-weight:400;font-style:normal;color:#2f2f2f;letter-spacing:0px;--x:-0.771px;transform:scaleX(0.9542);transform-origin:0px 0;left:354.00px;">AMERICAN</div>
<div class="t" style="top:1213.70px;font-size:22.7px;font-weight:400;font-style:normal;color:#2f2f2f;letter-spacing:0.335px;left:576.45px;">3400-0000-0000-009</div>
<div class="t" style="top:1213.70px;font-size:22.7px;font-weight:400;font-style:normal;color:#2f2f2f;letter-spacing:-0.150px;left:931.10px;">Blank</div>
<div class="t" style="top:1213.70px;font-size:22.7px;font-weight:400;font-style:normal;color:#2f2f2f;letter-spacing:0px;--x:-0.275px;transform:scaleX(0.9766);transform-origin:0px 0;left:1212.35px;">false</div>
<div class="t" style="top:1213.70px;font-size:22.7px;font-weight:400;font-style:normal;color:#2f2f2f;letter-spacing:0.000px;left:1503.80px;">0</div>
<div class="cb" style="left:0px;top:1257px"></div>
<div class="t" style="top:1246.70px;font-size:22.7px;font-weight:400;font-style:normal;color:#2f2f2f;letter-spacing:0.000px;right:1394.00px;text-align:right;">20</div>
<div class="t" style="top:1246.70px;font-size:22.7px;font-weight:400;font-style:normal;color:#2f2f2f;letter-spacing:0px;--x:-0.771px;transform:scaleX(0.9542);transform-origin:0px 0;left:354.00px;">AMERICAN</div>
<div class="t" style="top:1246.70px;font-size:22.7px;font-weight:400;font-style:normal;color:#2f2f2f;letter-spacing:0.250px;left:606.80px;">2123-222-2123</div>
<div class="t" style="top:1246.70px;font-size:22.7px;font-weight:400;font-style:normal;color:#2f2f2f;letter-spacing:0px;--x:-0.980px;transform:scaleX(0.9387);transform-origin:2px 0;left:920.75px;">15$OFF</div>
<div class="t" style="top:1246.70px;font-size:22.7px;font-weight:400;font-style:normal;color:#2f2f2f;letter-spacing:0px;--x:-0.275px;transform:scaleX(0.9766);transform-origin:0px 0;left:1212.35px;">false</div>
<div class="t" style="top:1246.70px;font-size:22.7px;font-weight:400;font-style:normal;color:#2f2f2f;letter-spacing:0.000px;left:1503.80px;">0</div>
<div class="cb" style="left:0px;top:1290px"></div>
<div class="t" style="top:1279.70px;font-size:22.7px;font-weight:400;font-style:normal;color:#2f2f2f;letter-spacing:0.000px;right:1394.00px;text-align:right;">21</div>
<div class="t" style="top:1279.70px;font-size:22.7px;font-weight:400;font-style:normal;color:#2f2f2f;letter-spacing:0px;--x:-1.429px;transform:scaleX(0.9123);transform-origin:1px 0;left:357.30px;">GIFTCARD</div>
<div class="t" style="top:1279.70px;font-size:22.7px;font-weight:400;font-style:normal;color:#2f2f2f;letter-spacing:0.183px;left:571.65px;">4111-1111-1111-1111</div>
<div class="t" style="top:1279.70px;font-size:22.7px;font-weight:400;font-style:normal;color:#2f2f2f;letter-spacing:0px;--x:-0.980px;transform:scaleX(0.9387);transform-origin:2px 0;left:920.75px;">15$OFF</div>
<div class="t" style="top:1279.70px;font-size:22.7px;font-weight:400;font-style:normal;color:#2f2f2f;letter-spacing:0.833px;left:1215.05px;">true</div>
<div class="t" style="top:1279.70px;font-size:22.7px;font-weight:400;font-style:normal;color:#2f2f2f;letter-spacing:0.000px;left:1503.80px;">0</div>
<div class="cb" style="left:0px;top:1323px"></div>
<div class="t" style="top:1312.70px;font-size:22.7px;font-weight:400;font-style:normal;color:#2f2f2f;letter-spacing:0.000px;right:1394.00px;text-align:right;">22</div>
<div class="t" style="top:1312.70px;font-size:22.7px;font-weight:400;font-style:normal;color:#2f2f2f;letter-spacing:0px;--x:-1.429px;transform:scaleX(0.9123);transform-origin:1px 0;left:357.30px;">GIFTCARD</div>
<div class="t" style="top:1312.70px;font-size:22.7px;font-weight:400;font-style:normal;color:#2f2f2f;letter-spacing:0.261px;left:570.45px;">5500-0000-0000-0004</div>
<div class="t" style="top:1312.70px;font-size:22.7px;font-weight:400;font-style:normal;color:#2f2f2f;letter-spacing:0px;--x:-1.725px;transform:scaleX(0.9014);transform-origin:0px 0;left:928.75px;">$5OFF</div>
<div class="t" style="top:1312.70px;font-size:22.7px;font-weight:400;font-style:normal;color:#2f2f2f;letter-spacing:0px;--x:-0.275px;transform:scaleX(0.9766);transform-origin:0px 0;left:1212.35px;">false</div>
<div class="t" style="top:1312.70px;font-size:22.7px;font-weight:400;font-style:normal;color:#2f2f2f;letter-spacing:0.000px;left:1503.80px;">0</div>
<div class="cb" style="left:0px;top:1356px"></div>
<div class="t" style="top:1345.70px;font-size:22.7px;font-weight:400;font-style:normal;color:#2f2f2f;letter-spacing:0.000px;right:1394.00px;text-align:right;">23</div>
<div class="t" style="top:1345.70px;font-size:22.7px;font-weight:400;font-style:normal;color:#2f2f2f;letter-spacing:0px;--x:-1.429px;transform:scaleX(0.9123);transform-origin:1px 0;left:357.30px;">GIFTCARD</div>
<div class="t" style="top:1345.70px;font-size:22.7px;font-weight:400;font-style:normal;color:#2f2f2f;letter-spacing:0.250px;left:570.55px;">6011-0000-0000-0004</div>
<div class="t" style="top:1345.70px;font-size:22.7px;font-weight:400;font-style:normal;color:#2f2f2f;letter-spacing:0px;--x:-1.220px;transform:scaleX(0.9315);transform-origin:1px 0;left:917.85px;">20%OFF</div>
<div class="t" style="top:1345.70px;font-size:22.7px;font-weight:400;font-style:normal;color:#2f2f2f;letter-spacing:0.833px;left:1215.05px;">true</div>
<div class="t" style="top:1345.70px;font-size:22.7px;font-weight:400;font-style:normal;color:#2f2f2f;letter-spacing:0.000px;left:1503.80px;">0</div>
<div class="cb" style="left:0px;top:1389px"></div>
<div class="t" style="top:1378.70px;font-size:22.7px;font-weight:400;font-style:normal;color:#2f2f2f;letter-spacing:0.000px;right:1394.00px;text-align:right;">24</div>
<div class="t" style="top:1378.70px;font-size:22.7px;font-weight:400;font-style:normal;color:#2f2f2f;letter-spacing:0px;--x:-1.429px;transform:scaleX(0.9123);transform-origin:1px 0;left:357.30px;">GIFTCARD</div>
<div class="t" style="top:1378.70px;font-size:22.7px;font-weight:400;font-style:normal;color:#2f2f2f;letter-spacing:0.335px;left:576.45px;">3400-0000-0000-009</div>
<div class="t" style="top:1378.70px;font-size:22.7px;font-weight:400;font-style:normal;color:#2f2f2f;letter-spacing:0px;--x:-1.240px;transform:scaleX(0.9295);transform-origin:2px 0;left:917.40px;">10%OFF</div>
<div class="t" style="top:1378.70px;font-size:22.7px;font-weight:400;font-style:normal;color:#2f2f2f;letter-spacing:0px;--x:-0.275px;transform:scaleX(0.9766);transform-origin:0px 0;left:1212.35px;">false</div>
<div class="t" style="top:1378.70px;font-size:22.7px;font-weight:400;font-style:normal;color:#2f2f2f;letter-spacing:0.000px;left:1503.30px;">1</div>
<div class="cb" style="left:0px;top:1422px"></div>
<div class="t" style="top:1411.70px;font-size:22.7px;font-weight:400;font-style:normal;color:#2f2f2f;letter-spacing:0.000px;right:1394.00px;text-align:right;">25</div>
<div class="t" style="top:1411.70px;font-size:22.7px;font-weight:400;font-style:normal;color:#2f2f2f;letter-spacing:0px;--x:-1.429px;transform:scaleX(0.9123);transform-origin:1px 0;left:357.30px;">GIFTCARD</div>
<div class="t" style="top:1411.70px;font-size:22.7px;font-weight:400;font-style:normal;color:#2f2f2f;letter-spacing:0.250px;left:606.80px;">2123-222-2123</div>
<div class="t" style="top:1411.70px;font-size:22.7px;font-weight:400;font-style:normal;color:#2f2f2f;letter-spacing:-0.150px;left:931.10px;">Blank</div>
<div class="t" style="top:1411.70px;font-size:22.7px;font-weight:400;font-style:normal;color:#2f2f2f;letter-spacing:0.833px;left:1215.05px;">true</div>
<div class="t" style="top:1411.70px;font-size:22.7px;font-weight:400;font-style:normal;color:#2f2f2f;letter-spacing:0.000px;left:1503.80px;">2</div>
<svg style="position:absolute;left:0;top:0" width="1662" height="1471" viewBox="0 0 1662 1471"><rect x="212.80" y="17.90" width="20.90" height="5.00" fill="#333"/><rect x="220.70" y="10.10" width="5.40" height="20.70" fill="#333"/><circle cx="1649.95" cy="18.25" r="10.9" fill="#333"/><rect x="1647.40" y="10.90" width="5.10" height="3.90" fill="#fff"/><polygon points="1645.70,16.40 1652.50,16.40 1652.50,22.00 1654.00,22.00 1654.00,24.20 1645.70,24.20 1645.70,22.00 1647.30,22.00 1647.30,18.30 1645.70,18.30" fill="#fff"/><defs><linearGradient id="bg1" x1="0" y1="0" x2="0" y2="1"><stop offset="0" stop-color="#3877a0"/><stop offset="1" stop-color="#5a9fc9"/></linearGradient><filter id="bl" x="-20%" y="-20%" width="140%" height="140%"><feGaussianBlur stdDeviation="0.45"/></filter></defs><g filter="url(#bl)"><circle cx="326.25" cy="59.3" r="12.9" fill="url(#bg1)"/><rect x="319.40" y="58.60" width="13.70" height="3.00" fill="#fff"/><rect x="324.70" y="53.40" width="3.10" height="13.10" fill="#fff"/></g><path d="M1602.9 58.2 L1611.2 66.3 L1619.5 58.2" fill="none" stroke="#333" stroke-width="2"/><polygon points="1637.90,57.80 1651.20,65.80 1637.90,73.80" fill="#333"/><circle cx="276.2" cy="566.2" r="11.1" fill="#333"/><rect x="270.10" y="564.10" width="12.30" height="4.50" fill="#fff"/><rect x="274.00" y="560.40" width="4.50" height="11.80" fill="#fff"/><circle cx="306.1" cy="566.2" r="11.1" fill="#333"/><path d="M301.0 561.1 L311.2 571.3 M311.2 561.1 L301.0 571.3" stroke="#fff" stroke-width="4.8"/><polygon points="324.70,570.30 335.00,560.00 345.30,570.30 341.70,573.90 335.00,567.10 328.30,573.90" fill="#333"/><polygon points="367.10,555.40 375.90,566.00 369.80,566.00 369.80,577.80 364.40,577.80 364.40,566.00 358.30,566.00" fill="#333"/><polygon points="396.90,577.40 405.90,566.80 399.80,566.80 399.80,555.10 394.00,555.10 394.00,566.80 387.90,566.80" fill="#333"/><polygon points="414.60,562.60 417.90,559.20 424.80,566.10 431.70,559.20 435.00,562.60 424.80,572.90" fill="#333"/><path d="M363.25 597.85 L378.55 613.15 M378.55 597.85 L363.25 613.15" stroke="#cccccc" stroke-width="5.8"/><polygon points="392.70,594.10 397.40,594.10 397.40,611.20 400.80,611.20 395.05,617.00 389.30,611.20 392.70,611.20" fill="#cccccc"/><polygon points="404.70,617.00 409.30,617.00 409.30,599.90 412.50,599.90 407.00,594.00 401.40,599.90 404.70,599.90" fill="#cccccc"/><circle cx="448.70" cy="605.40" r="11.4" fill="#cccccc"/><polygon points="455.30,605.40 448.50,600.70 448.50,604.00 442.90,604.00 442.90,606.90 448.50,606.90 448.50,610.20" fill="#fff"/><circle cx="622.70" cy="605.40" r="11.4" fill="#cccccc"/><polygon points="616.10,605.40 622.90,600.70 622.90,604.00 628.50,604.00 628.50,606.90 622.90,606.90 622.90,610.20" fill="#fff"/><path d="M662.75 597.85 L678.05 613.15 M678.05 597.85 L662.75 613.15" stroke="#cccccc" stroke-width="5.8"/><polygon points="692.20,594.10 696.90,594.10 696.90,611.20 700.30,611.20 694.55,617.00 688.80,611.20 692.20,611.20" fill="#cccccc"/><polygon points="704.20,617.00 708.80,617.00 708.80,599.90 712.00,599.90 706.50,594.00 700.90,599.90 704.20,599.90" fill="#cccccc"/><circle cx="748.20" cy="605.40" r="11.4" fill="#cccccc"/><polygon points="754.80,605.40 748.00,600.70 748.00,604.00 742.40,604.00 742.40,606.90 748.00,606.90 748.00,610.20" fill="#fff"/><circle cx="897.70" cy="605.40" r="11.4" fill="#cccccc"/><polygon points="891.10,605.40 897.90,600.70 897.90,604.00 903.50,604.00 903.50,606.90 897.90,606.90 897.90,610.20" fill="#fff"/><path d="M937.75 597.85 L953.05 613.15 M953.05 597.85 L937.75 613.15" stroke="#cccccc" stroke-width="5.8"/><polygon points="967.20,594.10 971.90,594.10 971.90,611.20 975.30,611.20 969.55,617.00 963.80,611.20 967.20,611.20" fill="#cccccc"/><polygon points="979.20,617.00 983.80,617.00 983.80,599.90 987.00,599.90 981.50,594.00 975.90,599.90 979.20,599.90" fill="#cccccc"/><circle cx="1023.20" cy="605.40" r="11.4" fill="#cccccc"/><polygon points="1029.80,605.40 1023.00,600.70 1023.00,604.00 1017.40,604.00 1017.40,606.90 1023.00,606.90 1023.00,610.20" fill="#fff"/><circle cx="1172.70" cy="605.40" r="11.4" fill="#cccccc"/><polygon points="1166.10,605.40 1172.90,600.70 1172.90,604.00 1178.50,604.00 1178.50,606.90 1172.90,606.90 1172.90,610.20" fill="#fff"/><path d="M1212.75 597.85 L1228.05 613.15 M1228.05 597.85 L1212.75 613.15" stroke="#cccccc" stroke-width="5.8"/><polygon points="1242.20,594.10 1246.90,594.10 1246.90,611.20 1250.30,611.20 1244.55,617.00 1238.80,611.20 1242.20,611.20" fill="#cccccc"/><polygon points="1254.20,617.00 1258.80,617.00 1258.80,599.90 1262.00,599.90 1256.50,594.00 1250.90,599.90 1254.20,599.90" fill="#cccccc"/><circle cx="1298.20" cy="605.40" r="11.4" fill="#cccccc"/><polygon points="1304.80,605.40 1298.00,600.70 1298.00,604.00 1292.40,604.00 1292.40,606.90 1298.00,606.90 1298.00,610.20" fill="#fff"/><circle cx="1472.20" cy="605.40" r="11.4" fill="#cccccc"/><polygon points="1465.60,605.40 1472.40,600.70 1472.40,604.00 1478.00,604.00 1478.00,606.90 1472.40,606.90 1472.40,610.20" fill="#fff"/><path d="M1512.25 597.85 L1527.55 613.15 M1527.55 597.85 L1512.25 613.15" stroke="#cccccc" stroke-width="5.8"/><polygon points="1541.70,594.10 1546.40,594.10 1546.40,611.20 1549.80,611.20 1544.05,617.00 1538.30,611.20 1541.70,611.20" fill="#cccccc"/><polygon points="1553.70,617.00 1558.30,617.00 1558.30,599.90 1561.50,599.90 1556.00,594.00 1550.40,599.90 1553.70,599.90" fill="#cccccc"/></svg>
</body></html>
